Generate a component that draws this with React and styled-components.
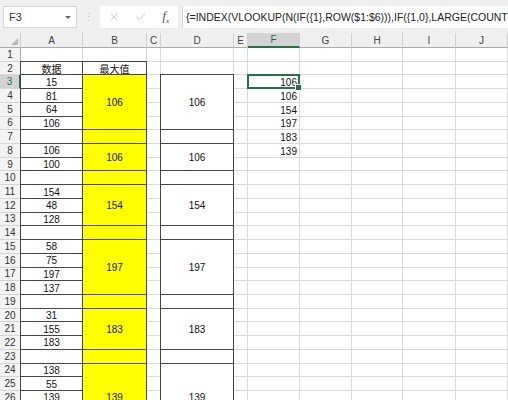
import React from 'react';
import styled, { createGlobalStyle, css } from 'styled-components';
import { X, Check } from 'lucide-react';

const GlobalStyle = createGlobalStyle`
  html, body {
    margin: 0;
    padding: 0;
    background: #fff;
    overflow: hidden;
  }
  #root {
    width: 508px;
    height: 400px;
    overflow: hidden;
  }
`;

const FONT = `"Liberation Sans", "Noto Sans CJK SC", Arial, sans-serif`;
const GREEN = '#217346';

const COLS = ['A', 'B', 'C', 'D', 'E', 'F', 'G', 'H', 'I', 'J'];
const ROW_COUNT = 28;

const groups = [
  { start: 3, values: [15, 81, 64, 106], max: 106 },
  { start: 8, values: [106, 100], max: 106 },
  { start: 11, values: [154, 48, 128], max: 154 },
  { start: 15, values: [58, 75, 197, 137], max: 197 },
  { start: 20, values: [31, 155, 183], max: 183 },
  { start: 24, values: [138, 55, 139, 92, 61], max: 139 },
];

const results = [106, 106, 154, 197, 183, 139];

function App() {
  const rows = Array.from({ length: ROW_COUNT }, (_, i) => i + 1);

  return (
    <>
      <GlobalStyle />
      <Window>
        <Toolbar>
          <NameBox>
            <span>F3</span>
            <Caret />
          </NameBox>
          <Grip>⋮</Grip>
          <FormulaButtons>
            <X size={12} strokeWidth={1.2} color="#a8a8a8" />
            <Check size={12} strokeWidth={1.2} color="#a8a8a8" />
            <Fx>
              f<sub>x</sub>
            </Fx>
          </FormulaButtons>
          <FormulaInput>
            {'{=INDEX(VLOOKUP(N(IF({1},ROW($1:$6))),IF({1,0},LARGE(COUNTIF(A$3:A$30,">"&A$3:A$30),ROW($1:$6)),A$3:A$30),2,0))}'}
          </FormulaInput>
        </Toolbar>

        <Sheet>
          <Corner $r={1} $c={1} />
          {COLS.map((letter, i) => (
            <ColHeader key={letter} $r={1} $c={i + 2} $active={letter === 'F'}>
              {letter}
            </ColHeader>
          ))}

          {rows.map((r) => (
            <React.Fragment key={r}>
              <RowHeader $r={r + 1} $c={1} $active={r === 3}>
                {r}
              </RowHeader>
              {COLS.map((letter, i) => (
                <GridCell key={letter} $r={r + 1} $c={i + 2} />
              ))}
            </React.Fragment>
          ))}

          <Cell $r={3} $c={2} $boxed>
            数据
          </Cell>
          <Cell $r={3} $c={3} $boxed>
            最大值
          </Cell>

          {groups.map((g) => {
            const blank = g.start + g.values.length;
            return (
              <React.Fragment key={g.start}>
                {g.values.map((v, i) => (
                  <Cell key={i} $r={g.start + i + 1} $c={2} $boxed>
                    {v}
                  </Cell>
                ))}
                <Cell $r={blank + 1} $c={2} $boxed />
                <Cell $r={g.start + 1} $c={3} $span={g.values.length} $boxed $fill="#ffff00">
                  {g.max}
                </Cell>
                <Cell $r={blank + 1} $c={3} $boxed $fill="#ffff00" />
                <Cell $r={g.start + 1} $c={5} $span={g.values.length} $boxed>
                  {g.max}
                </Cell>
                <Cell $r={blank + 1} $c={5} $boxed />
              </React.Fragment>
            );
          })}

          {results.map((v, i) => (
            <Cell key={i} $r={i + 4} $c={7} $align="flex-end">
              {v}
            </Cell>
          ))}

          <Selection $r={4} $c={7}>
            <Handle />
          </Selection>
        </Sheet>
      </Window>
    </>
  );
}

export default App;

const Window = styled.div`
  width: 508px;
  height: 400px;
  display: flex;
  flex-direction: column;
  font-family: ${FONT};
  overflow: hidden;
`;

const Toolbar = styled.div`
  height: 33px;
  flex: none;
  background: #efefef;
  display: flex;
  align-items: center;
  padding: 1px 0 0 3px;
  box-sizing: border-box;
`;

const NameBox = styled.div`
  width: 74px;
  height: 22px;
  box-sizing: border-box;
  background: #fff;
  border: 1px solid #d4d4d4;
  display: flex;
  align-items: center;
  justify-content: space-between;
  padding: 0 5px 0 5px;
  font-size: 11px;
  color: #333;
`;

const Caret = styled.span`
  width: 0;
  height: 0;
  border-left: 3px solid transparent;
  border-right: 3px solid transparent;
  border-top: 3px solid #666;
`;

const Grip = styled.div`
  width: 23px;
  text-align: center;
  color: #c4c4c4;
  font-size: 11px;
`;

const FormulaButtons = styled.div`
  width: 78px;
  height: 22px;
  box-sizing: border-box;
  background: #fff;
  display: flex;
  align-items: center;
  justify-content: space-between;
  padding: 0 9px 0 8px;
`;

const Fx = styled.span`
  font-family: "Liberation Serif", serif;
  font-style: italic;
  font-size: 12px;
  color: #444;

  sub {
    font-size: 7px;
  }
`;

const FormulaInput = styled.div`
  flex: 1;
  height: 22px;
  margin-left: 4px;
  box-sizing: border-box;
  background: #fff;
  border-left: 1px solid #d4d4d4;
  display: flex;
  align-items: center;
  padding-left: 3px;
  font-size: 10.5px;
  color: #222;
  white-space: nowrap;
  overflow: hidden;
`;

const Sheet = styled.div`
  display: grid;
  grid-template-columns: 21px 62px 64px 14px 73px 14px 52px 52px 51px 53px 52px;
  grid-template-rows: 15px repeat(${ROW_COUNT}, 13.72px);
  font-size: 10px;
  color: #111;
`;

const place = css`
  grid-row: ${(p) => p.$r} / span ${(p) => p.$span || 1};
  grid-column: ${(p) => p.$c};
`;

const Corner = styled.div`
  ${place};
  position: relative;
  background: #efefef;
  border-right: 1px solid #c8c8c8;
  border-bottom: 1px solid #ababab;

  &::after {
    content: '';
    position: absolute;
    right: 2px;
    bottom: 2px;
    border-left: 7px solid transparent;
    border-bottom: 7px solid #b9b9b9;
  }
`;

const ColHeader = styled.div`
  ${place};
  display: flex;
  align-items: center;
  justify-content: center;
  background: ${(p) => (p.$active ? '#d3d3d3' : '#efefef')};
  color: ${(p) => (p.$active ? GREEN : '#444')};
  border-right: 1px solid #d0d0d0;
  border-bottom: ${(p) => (p.$active ? `2px solid ${GREEN}` : '1px solid #ababab')};
  font-size: 10px;
`;

const RowHeader = styled.div`
  ${place};
  display: flex;
  align-items: center;
  justify-content: center;
  background: ${(p) => (p.$active ? '#d3d3d3' : '#f3f3f3')};
  color: ${(p) => (p.$active ? GREEN : '#333')};
  border-right: ${(p) => (p.$active ? `2px solid ${GREEN}` : '1px solid #ababab')};
  border-bottom: 1px solid #d6d6d6;
  font-size: 10px;
`;

const GridCell = styled.div`
  ${place};
  border-right: 1px solid #dadada;
  border-bottom: 1px solid #dadada;
`;

const Cell = styled.div`
  ${place};
  display: flex;
  align-items: center;
  justify-content: ${(p) => p.$align || 'center'};
  padding: ${(p) => (p.$align === 'flex-end' ? '1px 3px 0 0' : '1px 0 0 0')};
  background: ${(p) => p.$fill || 'transparent'};
  white-space: nowrap;
  ${(p) =>
    p.$boxed &&
    css`
      background: ${p.$fill || '#fff'};
      border: 1px solid #444;
      margin: -1px 0 0 -1px;
    `}
`;

const Selection = styled.div`
  ${place};
  position: relative;
  border: 2px solid ${GREEN};
  margin: -1px 0 0 -1px;
`;

const Handle = styled.span`
  position: absolute;
  right: -4px;
  bottom: -4px;
  width: 5px;
  height: 5px;
  background: ${GREEN};
  border: 1px solid #fff;
`;
